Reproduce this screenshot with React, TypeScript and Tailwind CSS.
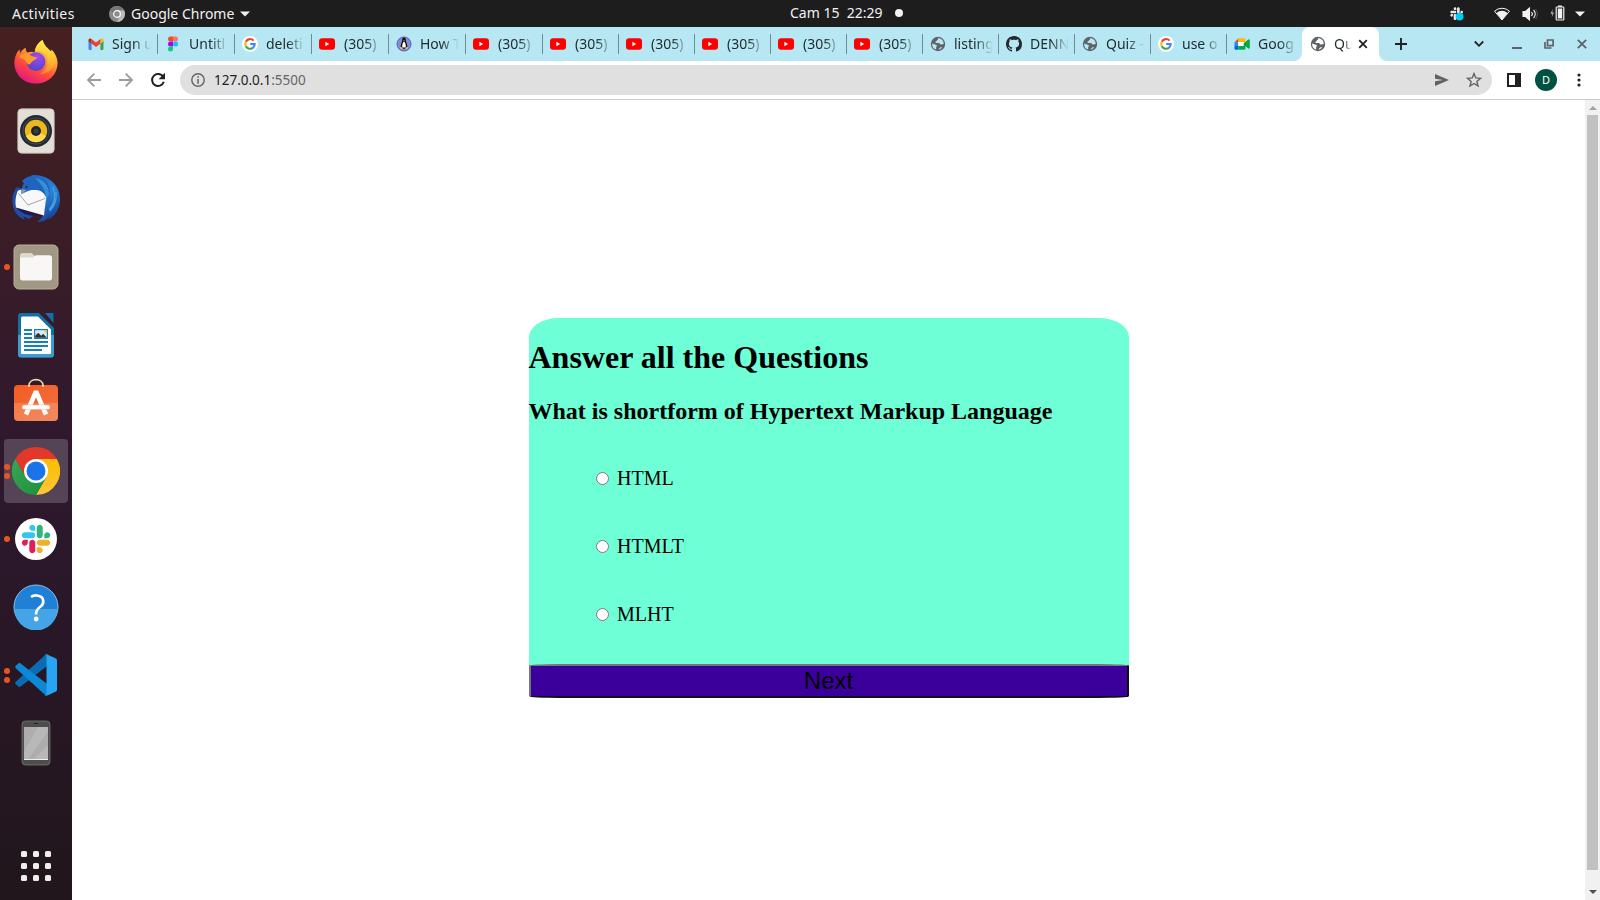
import type { ReactNode } from "react";

const GlobeIcon = ({ land = "#b7e7f3" }: { land?: string }) => (
  <svg width="16" height="16" viewBox="0 0 16 16">
    <circle cx="8" cy="8" r="7.2" fill="#5f6368" />
    <path d="M8.6 1.9c-1 .7-.2 1.6-1.300 2.100-1 .4-.4 1.500-1.500 1.600-.8.1-.4 1.300.4 1.400h2.600c1 .1.9 1.500 2 1.500s1-.5 2.900-.6a5.800 5.800 0 0 0-5.100-6zM2.200 7.400l2.800 1.100c.9.4 1.800.2 1.900 1.200.1.800-.9 1-.8 1.900l.1 2a6 6 0 0 1-4-6.200zM8.600 13.700c.1-1.200.9-1 1.300-1.900.4-.8 1.500-.5 2.400-.5a6 6 0 0 1-3.700 2.400z" fill={land} />
  </svg>
);

const GoogleIcon = () => (
  <svg width="16" height="16" viewBox="0 0 16 16">
    <circle cx="8" cy="8" r="8" fill="#fff" />
    <g fill="none" strokeWidth="2.100">
      <path d="M11.600 4.600A4.800 4.800 0 0 0 3.800 5.700" stroke="#ea4335" />
      <path d="M3.800 5.700a4.800 4.800 0 0 0 0 4.600" stroke="#fbbc05" />
      <path d="M3.800 10.300a4.800 4.800 0 0 0 7.300 1.300" stroke="#34a853" />
      <path d="M11.100 11.600A4.800 4.800 0 0 0 12.700 8H8.200" stroke="#4285f4" />
    </g>
  </svg>
);

const YoutubeIcon = () => (
  <svg width="16" height="16" viewBox="0 0 16 16">
    <rect x="0" y="2.200" width="16" height="11.600" rx="3.200" fill="#f00" />
    <path d="M6.400 5.800v4.400L10.200 8z" fill="#fff" />
  </svg>
);

const GmailIcon = () => (
  <svg width="16" height="16" viewBox="0 0 16 16">
    <path d="M1.100 14h2.500V7.500L.5 4.800v8.200z" fill="#4285f4" />
    <path d="M12.400 14h2.500l.6-1V4.800l-3.100 2.700z" fill="#34a853" />
    <path d="M12.400 3.100v4.700l3.100-2.300V4.100c0-1.600-1.600-2.100-3.100-1z" fill="#fbbc04" />
    <path d="M3.600 7.800V3.100L8 6.400l4.400-3.300v4.700L8 11.100z" fill="#ea4335" />
    <path d="M.5 4.100v1.400l3.100 2.300V3.100C2.100 2 .5 2.500.5 4.100z" fill="#c5221f" />
  </svg>
);

const FigmaIcon = () => (
  <svg width="16" height="16" viewBox="0 0 16 16">
    <path d="M8 .5H5.500a2.500 2.500 0 0 0 0 5H8z" fill="#f24e1e" />
    <path d="M8 .5h2.500a2.500 2.500 0 0 1 0 5H8z" fill="#ff7262" />
    <path d="M8 5.500H5.500a2.500 2.500 0 0 0 0 5H8z" fill="#a0f" />
    <circle cx="10.500" cy="8" r="2.500" fill="#1abcfe" />
    <path d="M8 10.500H5.500a2.500 2.500 0 1 0 2.500 2.500z" fill="#0acf83" />
  </svg>
);

const TuxIcon = () => (
  <svg width="16" height="16" viewBox="0 0 16 16">
    <circle cx="8" cy="8" r="7" fill="#7f8ddb" stroke="#5560b4" />
    <path d="M8 1.500c-1.600 0-1.900 1.500-1.800 3C6.100 6 4.300 8.500 4.700 11L8 13l3.300-2C11.700 8.500 9.900 6 9.800 4.500 9.900 3 9.700 1.500 8 1.500z" fill="#111" />
    <path d="M8 5.500C6.600 6.500 5.900 9 6.300 11.500h3.400C10.100 9 9.400 6.500 8 5.500z" fill="#fff" />
    <path d="M3.800 11l2.500.6.3 1.500-2.700-.6zM12.200 11l-2.500.6-.3 1.500 2.700-.6zM7 4.500h2L8 5.600z" fill="#f5c518" />
  </svg>
);

const GithubIcon = () => (
  <svg width="16" height="16" viewBox="0 0 16 16" fill="#24292f">
    <path d="M8 0C3.580 0 0 3.580 0 8c0 3.540 2.290 6.530 5.470 7.590.4.070.55-.17.55-.38 0-.19-.01-.82-.01-1.490-2.010.37-2.530-.49-2.690-.94-.09-.23-.48-.94-.82-1.130-.28-.15-.68-.52-.01-.53.63-.01 1.080.58 1.230.82.72 1.210 1.870.87 2.330.66.07-.52.28-.87.51-1.070-1.780-.2-3.640-.89-3.640-3.950 0-.87.31-1.590.82-2.150-.08-.2-.36-1.020.08-2.120 0 0 .67-.21 2.200.82.64-.18 1.320-.27 2-.27s1.360.09 2 .27c1.530-1.040 2.200-.82 2.200-.82.44 1.100.16 1.920.08 2.120.51.56.82 1.270.82 2.150 0 3.070-1.870 3.750-3.650 3.950.29.25.54.73.54 1.480 0 1.070-.01 1.930-.01 2.200 0 .21.15.46.55.38A8.010 8.010 0 0 0 16 8c0-4.420-3.580-8-8-8z" />
  </svg>
);

const MeetIcon = () => (
  <svg width="16" height="16" viewBox="0 0 16 16">
    <path d="M.5 6.200L4.500 2.300v3.900z" fill="#ea4335" />
    <path d="M.5 6.200h3.800v4H.5z" fill="#2684fc" />
    <path d="M.5 10h3.800v3.800H1.700A1.200 1.200 0 0 1 .5 12.600z" fill="#0066da" />
    <path d="M4.300 2.300h6c.7 0 1.200.5 1.200 1.200v2.700L9.500 8V6H4.300z" fill="#ffba00" />
    <path d="M4.300 10h5.200V8l2 1.600v3c0 .7-.5 1.200-1.200 1.200h-6z" fill="#00ac47" />
    <path d="M4.300 6h5.200v4H4.300z" fill="#fff" />
    <path d="M9.500 8l4.800-4.200c.5-.4 1.200-.1 1.200.5v7.400c0 .6-.7.900-1.200.5z" fill="#00832d" />
    <path d="M11.500 6.300l2.800-2.500c.5-.4 1.200-.1 1.200.5v7.400c0 .6-.7.900-1.200.5l-2.800-2.500z" fill="#00ac47" />
  </svg>
);

const tabs: { icon: ReactNode; title: string; wide?: boolean }[] = [
  { icon: <GmailIcon />, title: "Sign u", wide: true },
  { icon: <FigmaIcon />, title: "Untitl", wide: true },
  { icon: <GoogleIcon />, title: "deleti", wide: true },
  { icon: <YoutubeIcon />, title: "(305)", wide: true },
  { icon: <TuxIcon />, title: "How T", wide: true },
  { icon: <YoutubeIcon />, title: "(305)", wide: true },
  { icon: <YoutubeIcon />, title: "(305)" },
  { icon: <YoutubeIcon />, title: "(305)" },
  { icon: <YoutubeIcon />, title: "(305)" },
  { icon: <YoutubeIcon />, title: "(305)" },
  { icon: <YoutubeIcon />, title: "(305)" },
  { icon: <GlobeIcon />, title: "listing" },
  { icon: <GithubIcon />, title: "DENN" },
  { icon: <GlobeIcon />, title: "Quiz -" },
  { icon: <GoogleIcon />, title: "use o" },
  { icon: <MeetIcon />, title: "Goog" },
];

const slackPaths = {
  red: "M25.800 77.600c0 7.100-5.800 12.900-12.900 12.900S0 84.700 0 77.600s5.800-12.900 12.900-12.900h12.900v12.900zm6.500 0c0-7.100 5.800-12.900 12.900-12.900s12.900 5.800 12.900 12.900v32.300c0 7.100-5.800 12.900-12.900 12.900s-12.900-5.800-12.900-12.900V77.600z",
  blue: "M45.200 25.800c-7.100 0-12.900-5.800-12.900-12.900S38.100 0 45.200 0s12.900 5.800 12.900 12.900v12.900H45.200zm0 6.500c7.100 0 12.900 5.800 12.900 12.900s-5.800 12.900-12.900 12.900H12.900C5.800 58.100 0 52.300 0 45.200s5.800-12.900 12.900-12.900h32.300z",
  green: "M97 45.200c0-7.100 5.800-12.900 12.900-12.900s12.900 5.800 12.900 12.900-5.800 12.900-12.900 12.900H97V45.200zm-6.500 0c0 7.100-5.800 12.900-12.900 12.900s-12.900-5.800-12.900-12.900V12.900C64.700 5.800 70.500 0 77.600 0s12.900 5.800 12.900 12.900v32.300z",
  yellow: "M77.600 97c7.100 0 12.900 5.800 12.900 12.900s-5.800 12.900-12.900 12.900-12.900-5.800-12.900-12.900V97h12.900zm0-6.500c-7.100 0-12.900-5.800-12.900-12.900s5.800-12.900 12.900-12.900h32.300c7.100 0 12.900 5.800 12.900 12.900s-5.800 12.900-12.900 12.900H77.600z",
};

function TopBar() {
  return (
    <header className="flex h-[27px] shrink-0 items-center bg-[#1d1d1d] text-[14px] text-[#f2f2f2]">
      <div className="flex w-[788px] items-center">
        <span className="w-[97px] pl-3 tracking-[0.45px]">Activities</span>
        <svg className="ml-3 shrink-0" width="16" height="16" viewBox="0 0 16 16">
          <circle cx="8" cy="8" r="8" fill="#8a8a8a" />
          <path d="M8 4.200h7a8 8 0 0 1-7 11.800l3.300-6z" fill="#b9b9b9" />
          <path d="M1 4a8 8 0 0 1 14 .2H8A4 4 0 0 0 4.400 7z" fill="#777" />
          <circle cx="8" cy="8" r="3.300" fill="#8a8a8a" stroke="#fff" strokeWidth="1.200" />
        </svg>
        <span className="ml-1.5 whitespace-nowrap">Google Chrome</span>
        <svg className="ml-1.5" width="10" height="6" viewBox="0 0 10 6"><path d="M0 .5h10L5 5.500z" fill="#f2f2f2" /></svg>
      </div>
      <div className="flex items-center whitespace-pre pb-[2px]">
        <span className="w-[100px] pl-[2px]">Cam 15  22:29</span>
        <span className="ml-[7px] mt-px size-2 rounded-full bg-[#f2f2f2]" />
      </div>
      <div className="flex flex-1 items-center justify-end pr-[15px]">
        <svg width="16" height="16" viewBox="0 0 16 16">
          <g transform="translate(1.300 1.300) scale(.104)" fill="#e8e8e8">
            <path d={slackPaths.red} />
            <path d={slackPaths.blue} />
            <path d={slackPaths.green} />
            <path d={slackPaths.yellow} />
          </g>
          <circle cx="10.600" cy="10.600" r="3.900" fill="#00cdf5" />
        </svg>
        <svg className="ml-[29px]" width="16" height="14" viewBox="0 0 16 14" fill="#f2f2f2">
          <path d="M.5 4.200a11 11 0 0 1 15 0L8 13z" fill="none" stroke="#f2f2f2" strokeWidth="1" />
          <path d="M2.500 6a8 8 0 0 1 11 0L8 13z" />
        </svg>
        <svg className="ml-3" width="16" height="14" viewBox="0 0 16 14" fill="none" stroke="#f2f2f2" strokeWidth="1.100">
          <path d="M1 4.500h2.500L7.500 1v12L3.500 9.500H1z" fill="#f2f2f2" />
          <path d="M9.500 5a3 3 0 0 1 0 4M11.500 3a5.500 5.500 0 0 1 0 8" />
          <path d="M13.500 2a7.500 7.500 0 0 1 0 10" stroke="#777" strokeWidth=".6" />
        </svg>
        <svg className="mb-px ml-3" width="15" height="16" viewBox="0 0 15 16">
          <path d="M2.800 4L.4 8.800h1.900L1.600 12.500 4.100 7.500H2.300z" fill="#aaa" />
          <rect x="6.200" y="2" width="7.600" height="13" rx=".8" fill="none" stroke="#f2f2f2" strokeWidth="1.200" />
          <path d="M7.800 3.600h4.400v9.800H7.800zM8 .5h4V2H8z" fill="#f2f2f2" />
        </svg>
        <svg className="ml-2.5" width="10" height="6" viewBox="0 0 10 6"><path d="M0 .5h10L5 5.500z" fill="#f2f2f2" /></svg>
      </div>
    </header>
  );
}

const FirefoxLogo = () => (
  <svg className="mb-0.5" width="46" height="48" viewBox="0 0 48 48">
    <defs>
      <linearGradient id="fx-body" x1=".8" y1="0" x2=".25" y2="1">
        <stop offset="0" stopColor="#fff44f" />
        <stop offset=".35" stopColor="#ffa436" />
        <stop offset=".65" stopColor="#ff4a3c" />
        <stop offset="1" stopColor="#e0118c" />
      </linearGradient>
      <radialGradient id="fx-globe" cx=".6" cy=".25" r=".8">
        <stop offset="0" stopColor="#a04af5" />
        <stop offset="1" stopColor="#4f45c8" />
      </radialGradient>
      <linearGradient id="fx-flame" x1=".5" y1="0" x2=".5" y2="1">
        <stop offset="0" stopColor="#fff44f" />
        <stop offset=".5" stopColor="#ffcb32" />
        <stop offset="1" stopColor="#ff8a30" />
      </linearGradient>
    </defs>
    <path d="M3 17c1-3 2.500-5 4-6l.3 4c1.500-3 3.500-5 6-6 0 2.500.7 4.200 1.700 5.200 3-1 5.500-1 7.500-.2C23 8 27 3 31 1c1 6 6 9 8.500 12l.8-2C44 15 46.500 20 46.500 24.500 46.500 37 37 46.500 24 46.500S1.500 37 1.500 25c0-3 .5-5.500 1.500-8z" fill="url(#fx-body)" />
    <path d="M31 1c-5 3-7.500 7-8 12 6-2 12 2 13 8 .8 8-3 13-9 16 9 0 16-6 17-15 .2-3-1.200-6-3.200-8C37 10 32 7 31 1z" fill="url(#fx-flame)" opacity=".85" />
    <circle cx="24" cy="23.500" r="9.800" fill="url(#fx-globe)" />
    <path d="M6.500 19c2-3 6-4.500 9.500-3.500 2 2 5 3 9 3.500-.5 3-4 3-5.500 5-2 3.500-3.500 3-5 1-1-3-4-5-8-6z" fill="#ff9a2b" />
  </svg>
);

const RhythmboxLogo = () => (
  <svg width="48" height="48" viewBox="0 0 48 48">
    <rect x="5.800" y="1.800" width="36.400" height="44.400" rx="4" fill="#e3dfd6" stroke="#c4bdb3" strokeWidth=".8" />
    <circle cx="24" cy="24" r="16" fill="#232a35" />
    <circle cx="24" cy="24" r="13.200" fill="none" stroke="#4b5360" strokeWidth=".8" />
    <circle cx="24" cy="24" r="11.200" fill="#eab71d" />
    <path d="M14 29a11.200 11.200 0 0 0 20 0L24 24z" fill="#ffda4d" />
    <circle cx="24" cy="24" r="5" fill="#20242b" />
    <circle cx="24" cy="24" r="2.500" fill="#383d45" />
  </svg>
);

const ThunderbirdLogo = () => (
  <svg width="48" height="48" viewBox="0 0 48 48">
    <defs>
      <linearGradient id="tb-wing" x1=".2" y1="0" x2=".7" y2="1">
        <stop offset="0" stopColor="#1d63c4" />
        <stop offset=".5" stopColor="#2a86d8" />
        <stop offset="1" stopColor="#153f9a" />
      </linearGradient>
    </defs>
    <path d="M5 12C-1 19-1 31 4 38c2 3 5 5 9 7l-2-4 6 3 8-6L12 14z" fill="#1d4ea8" />
    <path d="M4 32l28 8-5 1c-9 0-17-1-23-9z" fill="#241a45" />
    <path d="M10 6c3-3 6-4.500 10-5l-1-1C36-1 48 10 48 24c0 10-5 17-12 21l2-4c-3 4-7 6-13 6 5-3 8-8 8-15z" fill="url(#tb-wing)" />
    <path d="M5 18c0-3 3-4 7-3h18c3 2 4.500 5 4 9l-2 16.500L4 32.500C3 27 3.500 22 5 18z" fill="#f8f8f8" />
    <path d="M6.500 18.500L16 30l17-6.500" fill="none" stroke="#9c9c9c" strokeWidth=".9" />
    <path d="M9.500 19C8.500 11 13 4 21 2.500 30 1 38 7 38 16l-2 11c-2-7-5-11-11-12-7-1-10 2-15.500 4z" fill="#2263be" />
    <path d="M23 3c9 1 14 8 14 16l-3 8c1-9-3-17-11-24z" fill="#3aa0e3" opacity=".75" />
    <path d="M41 12c3 8 2 16-4 23M44 17c1 7-1 13-6 19" fill="none" stroke="#3f9fe0" strokeWidth="1.400" />
    <path d="M9.500 19.500l.5-5.500 4.500 1z" fill="#8e989f" />
    <circle cx="14.500" cy="12" r="1" fill="#123" />
  </svg>
);

const FilesLogo = () => (
  <svg width="48" height="48" viewBox="0 0 48 48">
    <rect x="2" y="2" width="44" height="44" rx="5" fill="#a09882" stroke="#b8b09c" strokeWidth="1" />
    <path d="M8 12.500c0-1.500 1-2.500 2.500-2.500h9l4 3.500H38v6H8z" fill="#dfd9cc" />
    <path d="M8 16.500c0-1.500.8-2 2-2h10.500l3.500-2.300h13.500c1.500 0 2.500 1 2.500 2.300V35c0 1.500-1 2.500-2.500 2.500h-27C9 37.500 8 36.500 8 35z" fill="#f8f7f5" />
  </svg>
);

const WriterLogo = () => (
  <svg width="48" height="48" viewBox="0 0 48 48">
    <path d="M9 2h18l15 15v26.500a3 3 0 0 1-3 3H9a3 3 0 0 1-3-3V5a3 3 0 0 1 3-3z" fill="#126fa6" />
    <path d="M6 24h36v19.500a3 3 0 0 1-3 3H9a3 3 0 0 1-3-3z" fill="#3c9ccb" />
    <path d="M33 2h8.500v10z" fill="#126fa6" />
    <path d="M9 7a1.500 1.500 0 0 1 1.500-1.500h15.500L39 18.500V41.500a1.500 1.500 0 0 1-1.500 1.500h-27A1.500 1.500 0 0 1 9 41.500z" fill="#fff" />
    <g fill="#1480bd">
      <path d="M12 18h8v2h-8zM12 22h8v2h-8zM12 26h8v2h-8zM12 30h24v2H12zM12 34h24v2H12zM12 38h18v2H12z" />
      <path d="M22 18h14v10H22z" />
    </g>
    <path d="M23.200 19.200h11.600v7.600H23.200z" fill="#d9ecf5" />
    <path d="M23.200 26.800v-2l3-3 3 3 2-2 3.600 4z" fill="#333" />
    <path d="M31.500 19.200h3.300v3.300z" fill="#fdbf00" />
  </svg>
);

const SoftwareLogo = () => (
  <svg className="mb-1" width="48" height="50" viewBox="0 0 48 50">
    <defs>
      <linearGradient id="sw" x1="0" y1="0" x2="1" y2="1">
        <stop offset="0" stopColor="#f45c23" /><stop offset="1" stopColor="#ef7240" />
      </linearGradient>
    </defs>
    <rect x="2" y="9" width="44" height="36" rx="4" fill="url(#sw)" />
    <path d="M2 27h44v14a4 4 0 0 1-4 4H6a4 4 0 0 1-4-4z" fill="#fff" opacity=".16" />
    <path d="M17 11V9.500C17 1.700 31 1.700 31 9.500V11" fill="none" stroke="#f1d7ad" strokeWidth="1.700" />
    <path d="M14 38.500l10-23 10 23" fill="none" stroke="#fff" strokeWidth="4.600" strokeLinejoin="bevel" />
    <rect x="10" y="29" width="28" height="4.600" rx="2.300" fill="#fff" stroke="#f0a587" strokeWidth=".5" />
  </svg>
);

const ChromeLogo = () => (
  <svg width="48" height="48" viewBox="0 0 48 48">
    <defs>
      <linearGradient id="cr-y" x1="0" y1="1" x2="0" y2="0"><stop offset="0" stopColor="#fcc934" /><stop offset="1" stopColor="#fbbc04" /></linearGradient>
      <linearGradient id="cr-g" x1="0" y1="0" x2="1" y2="1"><stop offset="0" stopColor="#34a853" /><stop offset="1" stopColor="#1e8e3e" /></linearGradient>
    </defs>
    <path d="M3.215 12A24 24 0 0 1 44.785 12H24L13.600 30z" fill="#e2372b" />
    <path d="M44.785 12A24 24 0 0 1 24 48L34.400 30 24 12z" fill="url(#cr-y)" />
    <path d="M24 48A24 24 0 0 1 3.215 12L13.600 30H34.400z" fill="url(#cr-g)" />
    <circle cx="24" cy="24" r="12" fill="#fff" />
    <circle cx="24" cy="24" r="9.500" fill="#1a73e8" />
  </svg>
);

const SlackLogo = () => (
  <svg width="42" height="42" viewBox="0 0 42 42">
    <circle cx="21" cy="21" r="21" fill="#fff" />
    <g transform="translate(6.800 6.800) scale(.2315)">
      <path d={slackPaths.red} fill="#e01e5a" />
      <path d={slackPaths.blue} fill="#36c5f0" />
      <path d={slackPaths.green} fill="#2eb67d" />
      <path d={slackPaths.yellow} fill="#ecb22e" />
    </g>
  </svg>
);

const HelpLogo = () => (
  <svg width="46" height="46" viewBox="0 0 46 46">
    <circle cx="23" cy="23" r="22" fill="#1f80d6" stroke="#84c3ee" strokeWidth="1" />
    <path d="M1.500 25a21.500 21.500 0 0 0 43 0z" fill="#45a4e6" />
    <path d="M18 12.800c2-1.200 4-1.500 6-1.300 8 .8 7.500 8.500 3 11.500-2.500 1.800-4 3.500-4 7.500" fill="none" stroke="#fff" strokeWidth="2.700" />
    <circle cx="23.200" cy="35" r="2.400" fill="#fff" />
  </svg>
);

const CodeLogo = () => (
  <svg width="42" height="42" viewBox="0 0 42 42">
    <path d="M31 .2L.8 27.800c-.8.800-.8 1.800 0 2.500l2.500 2.200c.8.600 1.500.6 2.300 0L36 9z" fill="#0a6cb4" />
    <path d="M31 41.800L.8 14.200c-.8-.8-.8-1.800 0-2.500l2.500-2.200c.8-.6 1.500-.6 2.300 0L36 33z" fill="#0c89d6" />
    <path d="M31 0l9.500 4.200c1 .5 1.500 1.200 1.500 2.300v29c0 1.100-.5 1.800-1.500 2.300L31 42c-.7.200-1.200 0-1.800-.5 1 .6 2.300 0 2.300-1.500V2c0-1.500-1.300-2.100-2.300-1.500.6-.5 1.100-.7 1.800-.5z" fill="#27a5f3" />
  </svg>
);

const PhoneLogo = () => (
  <svg width="30" height="46" viewBox="0 0 30 46">
    <rect x="1" y="1" width="28" height="44" rx="3.500" fill="#4d4d4b" stroke="#777773" strokeWidth=".8" />
    <rect x="13" y="3" width="4" height="1" rx=".5" fill="#222" />
    <path d="M3 7h24v33H3z" fill="#b8b8b8" />
    <path d="M3 7h14L3 31zM27 11v14L12 40H7z" fill="#adadad" />
    <path d="M3 39.500h24" stroke="#eee" />
  </svg>
);

const dockItems: { logo: ReactNode; windows?: number; active?: boolean }[] = [
  { logo: <FirefoxLogo /> },
  { logo: <RhythmboxLogo /> },
  { logo: <ThunderbirdLogo /> },
  { logo: <FilesLogo />, windows: 1 },
  { logo: <WriterLogo /> },
  { logo: <SoftwareLogo /> },
  { logo: <ChromeLogo />, windows: 2, active: true },
  { logo: <SlackLogo />, windows: 1 },
  { logo: <HelpLogo /> },
  { logo: <CodeLogo />, windows: 2 },
  { logo: <PhoneLogo /> },
];

function Dock() {
  return (
    <nav className="flex w-[72px] shrink-0 flex-col items-center justify-between bg-linear-to-b from-[#46201f] via-[#2e182e] to-[#21161c] pt-1 pb-[19px]">
      <div className="flex flex-col gap-1">
        {dockItems.map((item, i) => (
          <div
            key={i}
            className={
              item.active
                ? "relative flex size-16 items-center justify-center rounded bg-[#554455]"
                : "relative flex size-16 items-center justify-center"
            }
          >
            {item.logo}
            {item.windows && (
              <div className="absolute top-0 left-0 flex h-full flex-col justify-center gap-[3px]">
                {Array.from({ length: item.windows }, (_, n) => (
                  <span key={n} className="size-1.5 rounded-full bg-[#e95420]" />
                ))}
              </div>
            )}
          </div>
        ))}
      </div>
      <div className="grid grid-cols-3 gap-1.5">
        {Array.from({ length: 9 }, (_, n) => (
          <span key={n} className="size-1.5 rounded-[1.5px] bg-[#f0eeec]" />
        ))}
      </div>
    </nav>
  );
}

const fade = "overflow-hidden pb-px whitespace-nowrap text-[14px] text-[#1f2a2d] [mask-image:linear-gradient(to_right,#000_55%,transparent)]";

function TabStrip() {
  return (
    <div className="flex h-[34px] shrink-0 bg-[#b7e7f3] pl-[9px]">
      {tabs.map((tab, i) => (
        <div
          key={i}
          className={
            tab.wide
              ? "flex w-[77px] shrink-0 items-center"
              : "flex w-[76px] shrink-0 items-center"
          }
        >
          <div className="ml-[7px] w-4 shrink-0">{tab.icon}</div>
          <span className={tab.title === "(305)" ? `${fade} ml-[9px] w-[38px] shrink-0` : `${fade} ml-2 w-[39px] shrink-0`}>{tab.title}</span>
          {i < tabs.length - 1 && <span className="ml-auto h-5 w-px shrink-0 bg-[#6f8c94]" />}
        </div>
      ))}
      <div className="relative -ml-px flex w-[77px] items-center rounded-t-lg bg-white">
        <svg className="absolute bottom-0 -left-2" width="8" height="8" viewBox="0 0 8 8"><path d="M8 0v8H0a8 8 0 0 0 8-8z" fill="#fff" /></svg>
        <svg className="absolute -right-2 bottom-0" width="8" height="8" viewBox="0 0 8 8"><path d="M0 0v8h8a8 8 0 0 1-8-8z" fill="#fff" /></svg>
        <div className="ml-2 w-4 shrink-0"><GlobeIcon land="#ffffff" /></div>
        <span className={`${fade} ml-2 w-[18px] shrink-0`}>Qu</span>
        <svg className="ml-1.5" width="10" height="10" viewBox="0 0 10 10"><path d="M1.200 1.200l7.600 7.600M8.800 1.200L1.200 8.800" stroke="#202124" strokeWidth="1.800" /></svg>
      </div>
      <svg className="ml-4 self-center" width="12" height="12" viewBox="0 0 12 12"><path d="M6 0v12M0 6h12" stroke="#202124" strokeWidth="1.900" /></svg>
      <div className="ml-auto flex items-center pr-[13px]">
        <svg width="10" height="8" viewBox="0 0 10 8"><path d="M.8 1.500L5 5.800l4.200-4.300" fill="none" stroke="#202124" strokeWidth="1.800" /></svg>
        <svg className="ml-7" width="10" height="10" viewBox="0 0 10 10"><path d="M0 9h10" stroke="#5f6368" strokeWidth="2" /></svg>
        <svg className="ml-[22px]" width="10" height="10" viewBox="0 0 10 10" fill="none" stroke="#5f6368" strokeWidth="1.700"><path d="M3.500 1h5.600v5.600H3.500zM1 3v6h6.500" /></svg>
        <svg className="ml-[23px]" width="10" height="10" viewBox="0 0 10 10"><path d="M.8.8l8.400 8.400M9.200.8L.8 9.200" stroke="#5f6368" strokeWidth="1.900" /></svg>
      </div>
    </div>
  );
}

function Toolbar() {
  return (
    <div className="flex h-[39px] shrink-0 items-center border-b border-[#cbcbcb] bg-white pl-[14px]">
      <svg width="16" height="16" viewBox="0 0 16 16" fill="none" stroke="#9a9c9f" strokeWidth="1.800"><path d="M15 8H2.500M8.300 1.700L2 8l6.300 6.300" /></svg>
      <svg className="ml-4" width="16" height="16" viewBox="0 0 16 16" fill="none" stroke="#9a9c9f" strokeWidth="1.800"><path d="M1 8h12.500M7.700 1.700L14 8l-6.300 6.300" /></svg>
      <svg className="ml-4" width="16" height="16" viewBox="0 0 16 16"><path d="M13.300 5A6 6 0 1 0 13.800 9.800" fill="none" stroke="#202124" strokeWidth="2" /><path d="M15 .8v6.400H8.600z" fill="#202124" /></svg>
      <div className="ml-[14px] flex h-[30px] w-[1312px] items-center rounded-full bg-[#e0e0e0] pr-2.5 pl-[11px]">
        <svg width="14" height="14" viewBox="0 0 14 14"><circle cx="7" cy="7" r="6.200" fill="none" stroke="#5f6368" strokeWidth="1.400" /><path d="M6.300 3.200h1.500v1.500H6.300zM6.300 6h1.500v4.700H6.300z" fill="#5f6368" /></svg>
        <span className="ml-[9px] text-[13.500px] text-[#202124]">127.0.0.1<span className="text-[#63666a]">:5500</span></span>
        <svg className="ml-auto" width="14" height="12" viewBox="0 0 14 12"><path d="M0 0l14 6-14 6V7.300L8 6 0 4.700z" fill="#5f6368" /></svg>
        <svg className="ml-[17px]" width="16" height="16" viewBox="0 0 16 16"><path d="M8 1.600l1.800 4.300 4.700.4-3.600 3.100 1.100 4.600L8 11.500 4 14l1.100-4.600-3.600-3.100 4.700-.4z" fill="none" stroke="#5f6368" strokeWidth="1.400" /></svg>
      </div>
      <svg className="ml-[15px]" width="14" height="14" viewBox="0 0 14 14"><path d="M1 1h12v12H1z" fill="none" stroke="#202124" strokeWidth="2" /><path d="M8 0h6v14H8z" fill="#202124" /></svg>
      <div className="ml-[14px] flex size-[22px] items-center justify-center rounded-full bg-[#00513f] text-[11px] text-white">D</div>
      <svg className="ml-5" width="4" height="14" viewBox="0 0 4 14" fill="#202124"><circle cx="2" cy="2" r="1.600" /><circle cx="2" cy="7" r="1.600" /><circle cx="2" cy="12" r="1.600" /></svg>
    </div>
  );
}

function Quiz() {
  return (
    <section className="flex h-[380px] w-[600px] flex-col rounded-[5%] bg-[#6effd7] [font-family:'Liberation_Serif',serif] text-black">
      <h1 className="mt-[21px] text-[32px] leading-[37px] font-bold">Answer all the Questions</h1>
      <h2 className="mt-[22px] text-[24px] leading-[27px] font-bold">What is shortform of Hypertext Markup Language</h2>
      <ul className="mt-[19px] pl-[67px]">
        {["HTML", "HTMLT", "MLHT"].map((answer) => (
          <li key={answer} className="flex h-[68px] items-center">
            <input type="radio" name="answer" id={answer} className="m-0 size-[13px]" />
            <label htmlFor={answer} className="ml-[8.500px] text-[20px] leading-none">{answer}</label>
          </li>
        ))}
      </ul>
      <button className="mt-4 block h-[34px] w-full rounded-[5%] border-2 border-t-[#767676] border-r-[#111] border-b-[#111] border-l-[#767676] bg-[#3b009b] [font-family:'Liberation_Sans',sans-serif] text-[24px] leading-none">
        Next
      </button>
    </section>
  );
}

export default function App() {
  return (
    <div className="flex h-[900px] w-[1600px] flex-col overflow-hidden bg-white [font-family:'Noto_Sans',sans-serif]">
      <TopBar />
      <div className="flex min-h-0 flex-1">
        <Dock />
        <div className="flex min-w-0 flex-1 flex-col">
          <TabStrip />
          <Toolbar />
          <div className="flex min-h-0 flex-1">
            <main className="flex flex-1 justify-center pt-[218px]">
              <Quiz />
            </main>
            <div className="flex w-[15px] flex-col items-center justify-between bg-[#f1f1f1]">
              <svg className="mt-[6px]" width="8" height="4" viewBox="0 0 8 4"><path d="M0 4h8L4 0z" fill="#a3a3a3" /></svg>
              <div className="mt-[5px] mb-5 w-[11px] flex-1 bg-[#c1c1c1]" />
              <svg className="mb-[6px]" width="8" height="4" viewBox="0 0 8 4"><path d="M0 0h8L4 4z" fill="#505050" /></svg>
            </div>
          </div>
        </div>
      </div>
    </div>
  );
}
